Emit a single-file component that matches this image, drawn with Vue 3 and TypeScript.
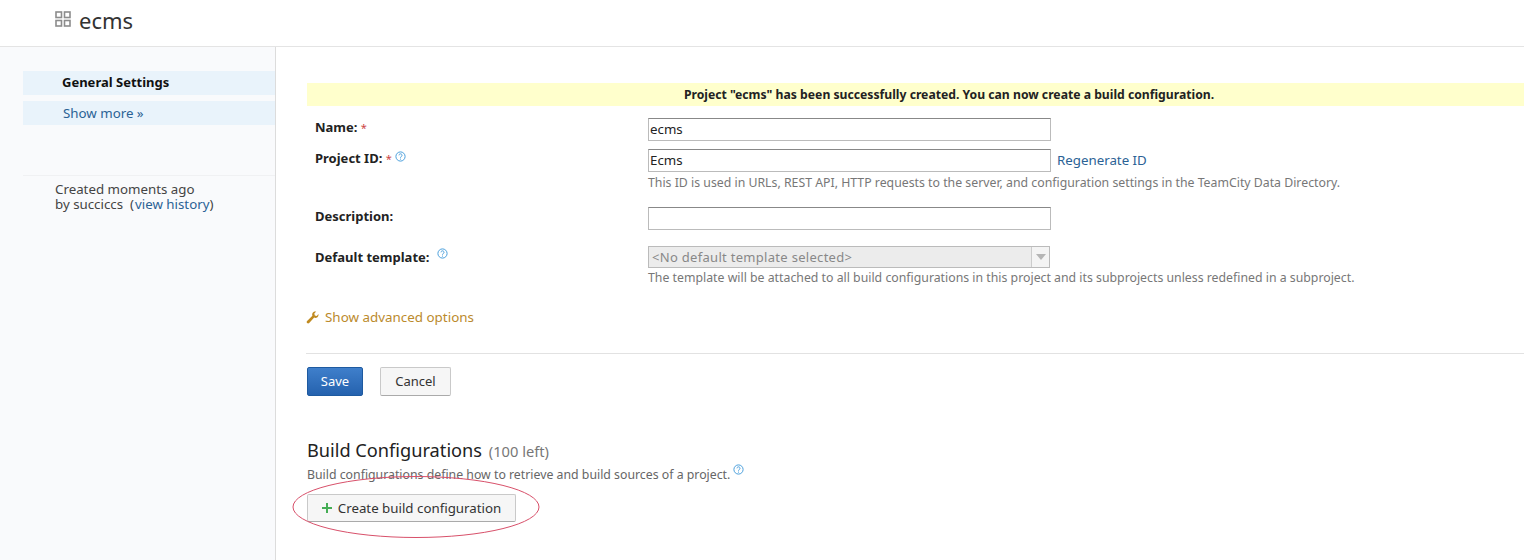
<script setup lang="ts">
const hintIcon = 'help'
</script>

<template>
  <div class="page">
    <header class="head">
      <svg class="grid-icon" width="16" height="16" viewBox="0 0 16 16" fill="none" stroke="#8c8c8c" stroke-width="1.6">
        <rect x="1" y="1" width="5.5" height="5.5" />
        <rect x="9.5" y="1" width="5.5" height="5.5" />
        <rect x="1" y="9.5" width="5.5" height="5.5" />
        <rect x="9.5" y="9.5" width="5.5" height="5.5" />
      </svg>
      <h1>ecms</h1>
    </header>
    <div class="body">
      <aside class="side">
        <div class="tab active">General Settings</div>
        <div class="tab link">Show more »</div>
        <div class="meta">
          Created moments ago<br />
          by succiccs &nbsp;(<a>view history</a>)
        </div>
      </aside>
      <main class="main">
        <div class="msg">Project "ecms" has been successfully created. You can now create a build configuration.</div>
        <div class="row r-name">
          <div class="lbl"><b>Name:</b> <i>*</i></div>
          <div class="val"><div class="input">ecms</div></div>
        </div>
        <div class="row r-id">
          <div class="lbl">
            <b>Project ID:</b> <i>*</i>
            <svg class="help" :data-name="hintIcon" width="11" height="11" viewBox="0 0 11 11"><circle cx="5.5" cy="5.5" r="4.6" fill="none" stroke="#4a9fdc" /><path d="M4 4.3a1.5 1.5 0 1 1 2.3 1.3c-.6.3-.8.6-.8 1.1M5.5 7.6v1" fill="none" stroke="#4a9fdc" /></svg>
          </div>
          <div class="val">
            <div class="inline"><div class="input">Ecms</div><a class="regen">Regenerate ID</a></div>
            <div class="note">This ID is used in URLs, REST API, HTTP requests to the server, and configuration settings in the TeamCity Data Directory.</div>
          </div>
        </div>
        <div class="row r-desc">
          <div class="lbl"><b>Description:</b></div>
          <div class="val"><div class="input"></div></div>
        </div>
        <div class="row r-tpl">
          <div class="lbl">
            <b>Default template:</b>
            <svg class="help gap" width="11" height="11" viewBox="0 0 11 11"><circle cx="5.5" cy="5.5" r="4.6" fill="none" stroke="#4a9fdc" /><path d="M4 4.3a1.5 1.5 0 1 1 2.3 1.3c-.6.3-.8.6-.8 1.1M5.5 7.6v1" fill="none" stroke="#4a9fdc" /></svg>
          </div>
          <div class="val">
            <div class="select">
              <span>&lt;No default template selected&gt;</span>
              <span class="arrow"><em></em></span>
            </div>
            <div class="note tight">The template will be attached to all build configurations in this project and its subprojects unless redefined in a subproject.</div>
          </div>
        </div>
        <a class="adv">
          <svg width="13" height="13" viewBox="0 0 13 13"><path d="M12.4 2.9c.3 1.5-.2 2.8-1.3 3.5-.9.6-2 .6-2.9.2L3.2 12c-.6.6-1.5.6-2.1 0-.6-.6-.6-1.500 0-2.100l5.300-5.100c-.4-1-.3-2.100.3-3C7.500.7 8.800.2 10.200.5L8.300 2.500l.5 2 2 .5z" fill="#c08a20" /></svg>
          Show advanced options
        </a>
        <hr class="rule" />
        <div class="actions">
          <button class="btn save">Save</button>
          <button class="btn cancel">Cancel</button>
        </div>
        <h2>Build Configurations <small>(100 left)</small></h2>
        <p class="bc-note">
          Build configurations define how to retrieve and build sources of a project.
          <svg class="help raise" width="11" height="11" viewBox="0 0 11 11"><circle cx="5.5" cy="5.5" r="4.6" fill="none" stroke="#4a9fdc" /><path d="M4 4.3a1.5 1.5 0 1 1 2.3 1.3c-.6.3-.8.6-.8 1.1M5.5 7.6v1" fill="none" stroke="#4a9fdc" /></svg>
        </p>
        <button class="btn create">
          <svg width="10" height="10" viewBox="0 0 10 10"><path d="M5 0v10M0 5h10" stroke="#45ad55" stroke-width="2" fill="none" /></svg>
          Create build configuration
        </button>
      </main>
    </div>
    <svg class="circle" width="250" height="66" viewBox="0 0 250 66">
      <ellipse cx="124" cy="33" rx="123" ry="30.500" fill="none" stroke="#d8506a" stroke-width="1" />
    </svg>
  </div>
</template>

<style scoped>
.page {
  position: relative;
  height: 560px;
  overflow: hidden;
  background: #fff;
  color: #222;
  font-family: "Noto Sans", "Open Sans", sans-serif;
  font-size: 13.3px;
}
.head {
  height: 46px;
  box-sizing: content-box;
  border-bottom: 1px solid #e4e4e4;
  display: flex;
  align-items: center;
  padding-left: 55px;
  gap: 8px;
}
.grid-icon {
  margin-top: -8px;
}
h1 {
  margin: -6px 0 0;
  font-size: 22px;
  font-weight: 400;
  color: #333;
}
.body {
  display: flex;
  height: 513px;
}
.side {
  flex: none;
  background: #f9fafc;
  border-right: 1px solid #dcdcdc;
  padding: 24px 0 0 23px;
  box-sizing: content-box;
  width: 252px;
}
.tab {
  height: 24px;
  line-height: 23px;
  background: #e9f3fb;
  padding-left: 39px;
  margin-bottom: 6px;
}
.active {
  font-weight: 700;
  font-size: 13px;
  color: #111;
}
.link {
  color: #2b6295;
  padding-left: 40px;
  line-height: 25px;
}
.meta {
  margin: 50px 0 0 0;
  padding: 6px 0 0 32px;
  border-top: 1px solid #f0f1f3;
  line-height: 15px;
  color: #444;
}
.meta a {
  color: #2b6295;
  margin-left: 1px;
}
.main {
  flex: 1;
  min-width: 0;
  padding: 36px 0 0 31px;
}
.msg {
  height: 23px;
  line-height: 23px;
  background: #ffffcc;
  text-align: center;
  font-weight: 700;
  font-size: 12.2px;
  color: #222;
  padding-left: 67px;
}
.row {
  display: flex;
}
.lbl {
  width: 333px;
  padding-left: 8px;
  flex: none;
  line-height: 17px;
  color: #222;
  font-size: 13px;
}
.lbl i {
  color: #c44;
  font-style: normal;
  font-size: 11px;
}
.val {
  min-width: 0;
}
.r-name {
  margin-top: 12px;
}
.r-name .lbl,
.r-id .lbl {
  padding-top: 1px;
}
.r-id {
  margin-top: 8px;
}
.r-desc {
  margin-top: 16px;
}
.r-desc .lbl {
  padding-top: 1px;
}
.r-tpl {
  margin-top: 16px;
}
.r-tpl .lbl {
  padding-top: 2px;
}
.input {
  box-sizing: border-box;
  width: 403px;
  height: 23px;
  line-height: 21px;
  padding-left: 1px;
  border: 1px solid #bbb;
  border-top-color: #888;
  color: #222;
}
.inline {
  display: flex;
  align-items: center;
  gap: 6px;
}
.regen {
  color: #2b6295;
  line-height: 21px;
  margin-top: -1px;
}
.note {
  margin-top: 2px;
  font-size: 12.3px;
  line-height: 17px;
  color: #777;
  white-space: nowrap;
}
.note.tight {
  margin-top: 1px;
}
.select {
  box-sizing: border-box;
  width: 402px;
  height: 22px;
  line-height: 20px;
  padding-left: 3px;
  border: 1px solid #bbb;
  background: #ececec;
  color: #888;
  font-size: 13px;
  letter-spacing: 0.3px;
  display: flex;
  justify-content: space-between;
}
.arrow {
  width: 17px;
  background: #f4f4f4;
  border-left: 1px solid #ccc;
  display: flex;
  align-items: center;
  justify-content: center;
}
.arrow em {
  width: 0;
  height: 0;
  border: 5px solid transparent;
  border-top: 6px solid #b5b5b5;
  border-bottom: 0;
}
.help {
  vertical-align: 1px;
  margin-left: 3px;
}
.help.gap {
  margin-left: 8px;
  vertical-align: 3px;
}
.help.raise {
  vertical-align: 4px;
  margin-left: -1px;
}
.adv {
  display: flex;
  align-items: center;
  gap: 6px;
  margin-top: 22px;
  margin-left: -1px;
  color: #bb8a2c;
  line-height: 18px;
  font-size: 13.4px;
}
.rule {
  margin: 27px 0 0 -1px;
  border: 0;
  border-top: 1px solid #e2e2e2;
}
.actions {
  display: flex;
  gap: 17px;
  margin-top: 13px;
}
.btn {
  font-family: inherit;
  font-size: 13px;
  border-radius: 2px;
  padding: 0 0 2px;
  cursor: default;
}
.save {
  width: 56px;
  height: 29px;
  color: #fff;
  border: 1px solid #1e5aa0;
  background: linear-gradient(#3f7fcb, #2562ae);
}
.cancel {
  width: 71px;
  height: 29px;
  color: #333;
  border: 1px solid #c9c9c9;
  border-bottom-color: #aaa;
  background: #f6f6f6;
}
h2 {
  margin: 43px 0 0;
  font-size: 18.2px;
  font-weight: 400;
  line-height: 23px;
  color: #222;
}
h2 small {
  font-size: 14.7px;
  color: #777;
  margin-left: 2px;
}
.bc-note {
  margin: 1px 0 0;
  font-size: 12.3px;
  line-height: 17px;
  color: #666;
}
.create {
  display: flex;
  align-items: center;
  justify-content: center;
  gap: 6px;
  margin-top: 11px;
  width: 209px;
  height: 28px;
  padding: 0;
  color: #333;
  font-size: 13.3px;
  border: 1px solid #c9c9c9;
  border-bottom-color: #aaa;
  background: #f6f6f6;
}
.circle {
  position: absolute;
  left: 292px;
  top: 474px;
}
</style>
